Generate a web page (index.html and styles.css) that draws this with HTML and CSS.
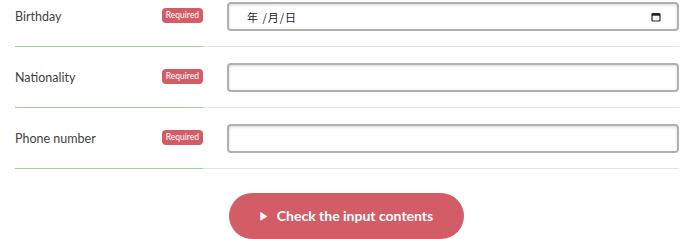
FILE: index.html
```html
<!DOCTYPE html>
<html lang="ja">
<head>
    <meta charset="UTF-8">
    <title>Entry form</title>
    <link rel="stylesheet" href="styles.css">
</head>
<body>
    <form class="entry-form">
        <div class="form-row">
            <div class="form-label">
                <span>Birthday</span>
                <span class="badge">Required</span>
            </div>
            <div class="form-field">
                <div class="field-box date-box">
                    <span class="date-text">年 /月/日</span>
                    <svg class="cal-icon" width="10" height="10" viewBox="0 0 10 10">
                        <rect x="1" y="1.5" width="8" height="7.5" rx="1" fill="none" stroke="#222" stroke-width="1.2"/>
                        <rect x="1" y="1.5" width="8" height="2.2" fill="#222"/>
                    </svg>
                </div>
            </div>
        </div>
        <div class="form-row">
            <div class="form-label">
                <span>Nationality</span>
                <span class="badge">Required</span>
            </div>
            <div class="form-field">
                <input class="field-box" type="text">
            </div>
        </div>
        <div class="form-row">
            <div class="form-label">
                <span>Phone number</span>
                <span class="badge">Required</span>
            </div>
            <div class="form-field">
                <input class="field-box" type="tel">
            </div>
        </div>
        <div class="actions">
            <button type="button" class="submit-button"><span class="arrow">&#9654;</span>Check the input contents</button>
        </div>
    </form>
</body>
</html>
```

FILE: styles.css
```css
:root {
    --red: #d35d67;
    --green: #9bd39b;
    --line: #e3e3e3;
    --text: #3f3f3f;
}

body {
    margin: 0;
    background: #ffffff;
    color: var(--text);
    font-family: Lato, "Noto Sans", sans-serif;
    overflow: hidden;
}

.entry-form {
    margin: -14px 13px 0 15px;
}

.form-row {
    display: flex;
}

.form-label {
    width: 188px;
    flex-shrink: 0;
    display: flex;
    align-items: center;
    justify-content: space-between;
    font-size: 12.5px;
    border-bottom: 1px solid var(--green);
}

.form-field {
    flex: 1;
    padding: 16px 0 15px 24px;
    border-bottom: 1px solid var(--line);
}

.badge {
    background: var(--red);
    color: #fff;
    font-size: 8.5px;
    line-height: 15px;
    padding: 0 4px;
    border-radius: 4px;
    margin-top: -2px;
}

.field-box {
    display: block;
    box-sizing: border-box;
    width: 100%;
    height: 29px;
    margin: 0;
    border: 2px solid #b0b0b0;
    border-radius: 4px;
    background: #fff;
    box-shadow: inset 0 1px 3px rgba(0, 0, 0, 0.15);
    font: inherit;
}

.date-box {
    display: flex;
    align-items: center;
    justify-content: space-between;
    padding: 0 16px 0 18px;
}

.date-text {
    font-family: "Noto Sans CJK JP", sans-serif;
    font-size: 11px;
    color: #222;
    letter-spacing: 1px;
}

.actions {
    display: flex;
    justify-content: center;
    margin: 24px -13px 0 -15px;
}

.submit-button {
    width: 235px;
    height: 46px;
    border: none;
    border-radius: 23px;
    background: var(--red);
    color: #fff;
    font-family: Lato, "Noto Sans", sans-serif;
    font-weight: 700;
    font-size: 14px;
    cursor: pointer;
}

.arrow {
    font-size: 10px;
    margin-right: 8px;
    position: relative;
    top: -1px;
}
```
